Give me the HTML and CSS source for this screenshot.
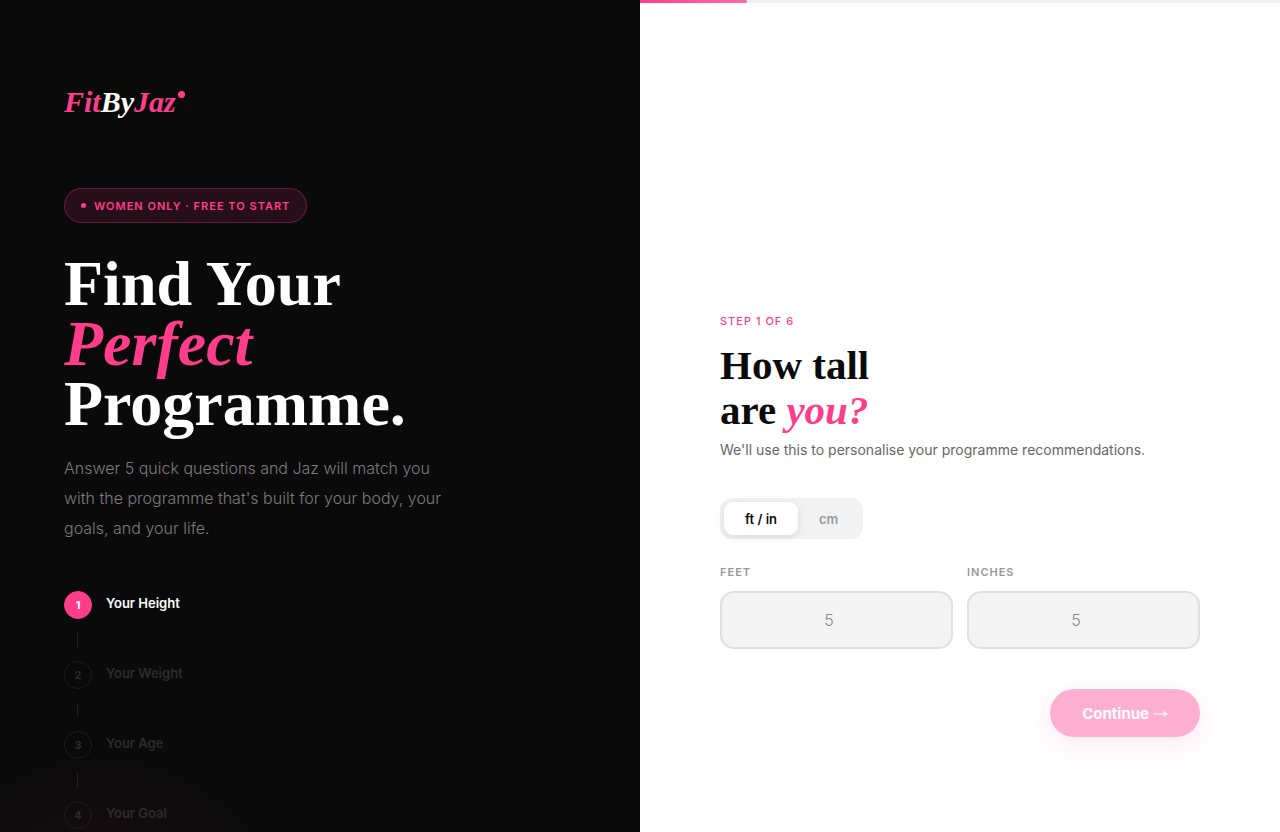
FILE: index.html
```html
<!DOCTYPE html>
<html lang="en">
<head>
  <meta charset="UTF-8">
  <meta name="viewport" content="width=device-width, initial-scale=1.0">
  <title>FitByJaz</title>
  <link rel="stylesheet" href="styles.css">
</head>
<body>
  <div class="page">
    <aside class="left-panel">
      <div class="logo">
        <span class="logo-text">Fit<span class="logo-by">By</span>Jaz</span>
        <span class="logo-dot"></span>
      </div>

      <div class="badge"><span class="badge-dot"></span>WOMEN ONLY · FREE TO START</div>

      <h1 class="headline">Find Your<br><em>Perfect</em><br>Programme.</h1>
      <p class="intro">Answer 5 quick questions and Jaz will match you with the programme that's built for your body, your goals, and your life.</p>

      <ol class="steps">
        <li class="step active"><span class="step-num">1</span><span class="step-name">Your Height</span></li>
        <li class="step"><span class="step-num">2</span><span class="step-name">Your Weight</span></li>
        <li class="step"><span class="step-num">3</span><span class="step-name">Your Age</span></li>
        <li class="step"><span class="step-num">4</span><span class="step-name">Your Goal</span></li>
      </ol>
    </aside>

    <main class="right-panel">
      <div class="progress"><div class="progress-fill"></div></div>

      <form class="question">
        <div class="step-label">STEP 1 OF 6</div>
        <h2 class="question-title">How tall<br>are <em>you?</em></h2>
        <p class="question-sub">We'll use this to personalise your programme recommendations.</p>

        <div class="unit-toggle">
          <button type="button" class="unit-btn selected">ft / in</button>
          <button type="button" class="unit-btn">cm</button>
        </div>

        <div class="fields">
          <div class="field">
            <label for="feet">FEET</label>
            <input type="number" id="feet" placeholder="5">
          </div>
          <div class="field">
            <label for="inches">INCHES</label>
            <input type="number" id="inches" placeholder="5">
          </div>
        </div>

        <button type="submit" class="continue-btn" disabled>
          Continue
          <svg class="arrow" viewBox="0 0 15 10" aria-hidden="true"><path d="M0 6h14M11 3.400c.600 1.400 1.500 2.200 3 2.600c-1.500.400-2.400 1.200-3 2.600"/></svg>
        </button>
      </form>
    </main>
  </div>
</body>
</html>
```
FILE: styles.css
```css
:root {
  --pink: #ff3d8b;
  --black: #0a0a0a;
  --serif: "Liberation Serif", serif;
  --sans: "Inter", sans-serif;
}

* {
  box-sizing: border-box;
  margin: 0;
  padding: 0;
}

body {
  font-family: var(--sans);
  background: #fff;
  color: var(--black);
}

.page {
  display: grid;
  grid-template-columns: 1fr 1fr;
  height: 100vh;
  overflow: hidden;
}

/* Left side */
.left-panel {
  padding: 84px 64px 0;
  overflow: hidden;
  background: radial-gradient(circle at 100px 950px, rgba(255, 61, 139, 0.08), transparent 200px) var(--black);
}

.logo {
  display: flex;
  gap: 2px;
  margin-bottom: 68px;
}

.logo-text {
  font: italic bold 30px/36px var(--serif);
  color: var(--pink);
}

.logo-by {
  color: #fff;
}

.logo-dot {
  width: 7px;
  height: 7px;
  margin-top: 7px;
  border-radius: 50%;
  background: var(--pink);
}

.badge {
  display: inline-flex;
  align-items: center;
  gap: 8px;
  height: 35px;
  padding: 0 16px;
  border: 1px solid rgba(255, 61, 139, 0.3);
  border-radius: 18px;
  background: rgba(255, 61, 139, 0.12);
  color: var(--pink);
  font-size: 11px;
  font-weight: 600;
  letter-spacing: 1px;
}

.badge-dot {
  width: 5px;
  height: 5px;
  border-radius: 50%;
  background: var(--pink);
}

.headline {
  margin-top: 31px;
  color: #fff;
  font: bold 64px/60px var(--serif);
}

.headline em,
.question-title em {
  color: var(--pink);
}

.intro {
  max-width: 380px;
  margin-top: 19px;
  color: #7c7c7c;
  font-size: 16px;
  font-weight: 300;
  line-height: 30px;
}

.steps {
  margin-top: 34px;
  list-style: none;
}

.step {
  display: flex;
  align-items: center;
  gap: 14px;
  height: 56px;
  color: #2c2c2c;
  font-size: 13px;
  font-weight: 600;
}

.step-num {
  display: flex;
  align-items: center;
  justify-content: center;
  width: 28px;
  height: 28px;
  border: 1px solid #1c1c1c;
  border-radius: 50%;
  font-size: 11px;
  font-weight: 700;
}

.step-name {
  padding-bottom: 4px;
}

.step.active {
  color: #fff;
}

.step.active .step-num {
  border-color: var(--pink);
  background: var(--pink);
}

/* connector line between two steps */
.step + .step {
  flex-wrap: wrap;
  row-gap: 0;
  height: auto;
  padding-bottom: 14px;
}

.step + .step::before {
  content: "";
  width: 1px;
  height: 14px;
  margin: 0 calc(100% - 14px) 14px 13px;
  background: #222;
}

/* Right side */
.right-panel {
  background: #fff;
}

.progress {
  height: 3px;
  background: #f0f0f0;
}

.progress-fill {
  width: calc(100% / 6);
  height: 100%;
  border-radius: 0 2px 2px 0;
  background: linear-gradient(90deg, var(--pink), #ff6ba8);
}

.question {
  display: flex;
  flex-direction: column;
  align-items: flex-start;
  padding: 310px 80px 0;
}

.step-label {
  color: var(--pink);
  font-size: 11px;
  font-weight: 500;
  line-height: 16px;
  letter-spacing: 1px;
}

.question-title {
  margin-top: 14px;
  font: bold 41px/45px var(--serif);
}

.question-sub {
  margin-top: 5px;
  color: #666;
  font-size: 14px;
  line-height: 24px;
}

.unit-toggle {
  display: flex;
  margin-top: 36px;
  padding: 4px;
  border-radius: 12px;
  background: #f2f2f2;
}

.unit-btn {
  height: 33px;
  padding: 0 21px;
  border: none;
  border-radius: 9px;
  background: transparent;
  color: #999;
  font: 600 13px var(--sans);
  cursor: pointer;
}

.unit-btn.selected {
  background: #fff;
  color: var(--black);
  box-shadow: 0 2px 8px rgba(0, 0, 0, 0.1);
}

.fields {
  display: grid;
  grid-template-columns: 1fr 1fr;
  gap: 14px;
  width: 100%;
  margin-top: 25px;
}

.field label {
  display: block;
  margin-bottom: 11px;
  color: #999;
  font-size: 11px;
  font-weight: 600;
  line-height: 16px;
  letter-spacing: 1px;
}

.field input {
  display: block;
  width: 100%;
  height: 58px;
  padding: 0 20px;
  border: 2px solid #e0e0e0;
  border-radius: 14px;
  background: #f4f4f4;
  font: 300 16px var(--sans);
  text-align: center;
}

.field input::placeholder {
  color: #888;
}

.continue-btn {
  display: flex;
  align-items: center;
  gap: 4px;
  align-self: flex-end;
  height: 48px;
  margin-top: 40px;
  padding: 0 32px;
  border: none;
  border-radius: 24px;
  background: var(--pink);
  color: #fff;
  font: 700 15px var(--sans);
  box-shadow: 0 8px 28px rgba(255, 61, 139, 0.25);
}

.continue-btn:disabled {
  opacity: 0.4;
}

.arrow {
  width: 15px;
  height: 10px;
  fill: none;
  stroke: #fff;
  stroke-width: 1.2;
}
```
